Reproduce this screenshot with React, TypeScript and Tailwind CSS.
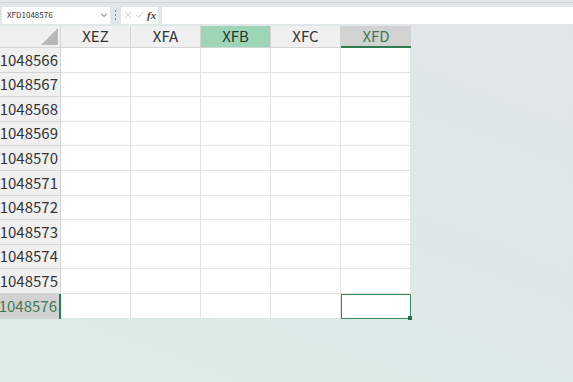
import React from "react";

const cols = ["XEZ", "XFA", "XFB", "XFC", "XFD"];
const rows = Array.from({ length: 11 }, (_, i) => 1048566 + i);

export default function App() {
  return (
    <div
      className="h-[382px] w-[573px] overflow-hidden bg-[linear-gradient(200deg,#e1e6ea_0%,#dfe8e8_50%,#dcede6_100%)]"
      style={{ fontFamily: '"Noto Sans CJK JP", "Noto Sans", sans-serif' }}
    >
      <div className="h-[3px] border-b border-[#cfd4d8] bg-[#e4e8eb]" />
      <div className="flex h-[22px] items-center pl-[2px] pt-[2px]">
        <div className="flex h-[17px] w-[108px] items-center justify-between bg-white pl-[5px] pr-[2px]">
          <span className="text-[8px] leading-none text-[#333]">XFD1048576</span>
          <svg width="8" height="8" viewBox="0 0 8 8">
            <path d="M1.5 3 L4 5.5 L6.5 3" fill="none" stroke="#555" strokeWidth="1" />
          </svg>
        </div>
        <div className="flex w-[11px] flex-col items-center justify-center gap-[2px]">
          <span className="h-[2px] w-[1.5px] bg-[#888]" />
          <span className="h-[2px] w-[1.5px] bg-[#888]" />
          <span className="h-[2px] w-[1.5px] bg-[#888]" />
        </div>
        <div className="flex h-[17px] w-[37px] items-center gap-[3px] bg-white pl-[3px]">
          <svg width="8" height="8" viewBox="0 0 8 8">
            <path d="M1 1 L7 7 M7 1 L1 7" stroke="#c4c4c4" strokeWidth="0.9" />
          </svg>
          <svg width="9" height="8" viewBox="0 0 9 8">
            <path d="M1 4 L3.5 6.5 L8 1" fill="none" stroke="#c4c4c4" strokeWidth="0.9" />
          </svg>
          <span
            className="text-[11px] font-bold italic leading-none text-[#444]"
            style={{ fontFamily: '"Liberation Serif", serif' }}
          >
            fx
          </span>
        </div>
        <div className="ml-[4px] h-[17px] flex-1 bg-white" />
      </div>

      <div className="mt-[1px] flex">
        <div className="flex flex-col">
          <div className="flex h-[22px] w-[61px] items-end justify-end border-b border-r border-[#d4d4d4] bg-[#f0f0f0] p-[2px]">
            <div className="h-[17px] w-[17px] bg-[#b8b8b8] [clip-path:polygon(100%_0,100%_100%,0_100%)]" />
          </div>
          {rows.map((r, i) => {
            const sel = i === rows.length - 1;
            return (
              <div
                key={r}
                className={
                  sel
                    ? "flex h-[24.6px] w-[61px] items-center justify-end border-r-2 border-[#2e7d50] bg-[#d2d2d2] pr-[2px] text-[15px] text-[#3f7a55]"
                    : "flex h-[24.6px] w-[61px] items-center justify-end border-b border-r border-[#d4d4d4] bg-[#f0f0f0] pr-[2px] text-[15px] text-[#333]"
                }
              >
                {r}
              </div>
            );
          })}
        </div>
        {cols.map((c) => {
          const green = c === "XFB";
          const sel = c === "XFD";
          return (
            <div key={c} className="flex flex-col">
              <div
                className={
                  green
                    ? "flex h-[22px] w-[70px] items-center justify-center border-b border-r border-[#d4d4d4] bg-[#9fd5b7] text-[15px] text-[#1d3a2a]"
                    : sel
                    ? "flex h-[22px] w-[70px] items-center justify-center border-b-2 border-[#2e7d50] bg-[#d2d2d2] text-[15px] text-[#3f7a55]"
                    : "flex h-[22px] w-[70px] items-center justify-center border-b border-r border-[#d4d4d4] bg-[#f0f0f0] text-[15px] text-[#333]"
                }
              >
                {c}
              </div>
              {rows.map((r, i) => {
                const active = sel && i === rows.length - 1;
                return active ? (
                  <div key={r} className="relative h-[24.6px] w-[70px] border-[1.5px] border-[#3b8a5c] bg-white">
                    <span className="absolute -bottom-[2px] -right-[2px] h-[4px] w-[4px] bg-[#217346]" />
                  </div>
                ) : (
                  <div key={r} className="h-[24.6px] w-[70px] border-b border-r border-[#e3e3e3] bg-white" />
                );
              })}
            </div>
          );
        })}
      </div>
    </div>
  );
}
